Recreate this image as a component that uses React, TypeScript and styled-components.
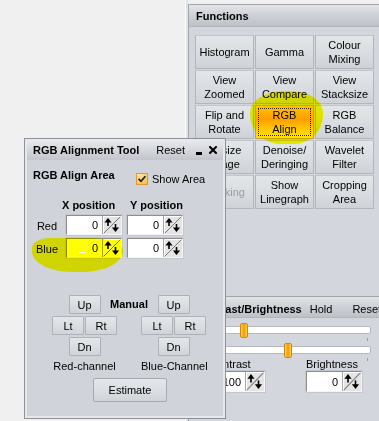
import React from "react";
import styled, { createGlobalStyle } from "styled-components";

const GlobalStyle = createGlobalStyle`
  html, body { margin: 0; padding: 0; background: #f0f0f0; }
  body { font-family: "Liberation Sans", Arial, sans-serif; font-size: 11px; color: #000; }
  *, *::before, *::after { box-sizing: border-box; }
`;

const Page = styled.div`
  position: relative;
  width: 379px;
  height: 421px;
  overflow: hidden;
  display: flex;
  background: #f0f0f0;
`;

const Workspace = styled.div`
  flex: none;
  width: 186px;
  border-right: 1px solid #fdfdfd;
`;

const Side = styled.div`
  flex: 1;
  min-width: 0;
  border-left: 2px solid #e2e3e5;
  padding-top: 4px;
  display: flex;
  flex-direction: column;
`;

const Panel = styled.div`
  flex: 1;
  width: 200px;
  border: 1px solid #a2a6ac;
  border-right: none;
  border-bottom: none;
  background: #d3d7dd;
  display: flex;
  flex-direction: column;
`;

const Section = styled.div<{ $h?: number }>`
  flex: none;
  height: ${(p) => (p.$h ? `${p.$h}px` : "auto")};
  display: flex;
  flex-direction: column;
  & + & {
    border-top: 1px solid #a2a6ac;
  }
`;

const Header = styled.div<{ $h: number; $pt: number }>`
  height: ${(p) => p.$h}px;
  padding: ${(p) => p.$pt}px 0 0 7px;
  line-height: 20px;
  display: flex;
  white-space: nowrap;
  background: linear-gradient(#e3e5e8 0%, #cfd2d7 45%, #bec2c8 100%);
  border-bottom: 1px solid #b3b7bd;
`;

const HeaderTitle = styled.span`
  font-weight: bold;
`;

const HeaderLink = styled.span<{ $ml: number }>`
  margin-left: ${(p) => p.$ml}px;
`;

const FnGrid = styled.div`
  display: grid;
  grid-template-columns: repeat(3, 59px);
  grid-auto-rows: 34px;
  gap: 1px;
  margin: 8px 0 0 6px;
`;

const FnBtn = styled.div<{ $active?: boolean; $disabled?: boolean }>`
  position: relative;
  display: flex;
  align-items: center;
  justify-content: center;
  text-align: center;
  line-height: 14px;
  white-space: pre-line;
  color: ${(p) => (p.$disabled ? "#9a9da2" : "#000")};
  border: 1px solid ${(p) => (p.$active ? "#c8a040" : "#b3b7bd")};
  border-top-color: ${(p) => (p.$active ? "#d8a030" : "#c2c5ca")};
  background: ${(p) =>
    p.$active
      ? "linear-gradient(#ffc34a 0%, #ff9e10 42%, #ffc400 68%, #ffe400 100%)"
      : "linear-gradient(#e3e6e9 0%, #d9dce0 55%, #cfd3d8 100%)"};
  &::after {
    content: "";
    display: ${(p) => (p.$active ? "block" : "none")};
    position: absolute;
    inset: 2px;
    border: 1px dotted #3a2a00;
  }
`;

const SliderBlock = styled.div`
  margin: 8px 0 0 7px;
  display: flex;
  flex-direction: column;
  gap: 12px;
`;

const Track = styled.div`
  position: relative;
  width: 175px;
  height: 8px;
  background: #fff;
  border: 1px solid #b6bac0;
  border-radius: 2px;
`;

const Thumb = styled.div`
  position: absolute;
  top: -4px;
  width: 8px;
  height: 15px;
  border: 1px solid #d58a00;
  border-radius: 2px;
  background: linear-gradient(90deg, #ffd24a 0%, #f29a10 50%, #ffd24a 100%);
`;

const Tick = styled.div`
  position: absolute;
  top: 11px;
  width: 1px;
  height: 3px;
  background: #9a9ea4;
`;

const ValueRow = styled.div`
  display: flex;
  margin: 4px 0 0 20px;
  gap: 41px;
`;

const ValueCol = styled.div`
  display: flex;
  flex-direction: column;
`;

const ValueLabel = styled.div`
  line-height: 13px;
  height: 13px;
  white-space: nowrap;
`;

/* spin box */
const SpinWrap = styled.div<{ $w: number; $h: number }>`
  position: relative;
  display: flex;
  width: ${(p) => p.$w}px;
  height: ${(p) => p.$h}px;
  border: 1px solid;
  border-color: #8d8d8d #f6f6f6 #f6f6f6 #8d8d8d;
  outline: 1px solid #c4c7cc;
`;

const SpinField = styled.div<{ $hl?: boolean }>`
  flex: 1;
  position: relative;
  background: ${(p) => (p.$hl ? "#ffff00" : "#fff")};
  border-right: 1px solid #a8a8a8;
  text-align: right;
  padding-right: 4px;
  display: flex;
  align-items: center;
  justify-content: flex-end;
`;

const SpinBtn = styled.div<{ $hl?: boolean }>`
  flex: none;
  width: 18px;
  display: flex;
  background: ${(p) => (p.$hl ? "#ffff00" : "#e4e4e4")};
  svg {
    display: block;
  }
`;

const Caret = styled.span`
  position: absolute;
  left: 12px;
  bottom: 4px;
  width: 6px;
  height: 1px;
  background: #fff;
  z-index: 5;
`;

function SpinArrows() {
  return (
    <svg width="18" height="100%" viewBox="0 0 18 18" preserveAspectRatio="none">
      <line x1="0.5" y1="17.5" x2="17.5" y2="0.5" stroke="#777" strokeWidth="1" />
      <path d="M5 2 L8.6 6.4 L1.4 6.4 Z" fill="#000" />
      <rect x="4.2" y="5" width="1.6" height="5" fill="#000" />
      <path d="M12.5 16 L16.1 11.6 L8.9 11.6 Z" fill="#000" />
      <rect x="11.7" y="8" width="1.6" height="5" fill="#000" />
      <line x1="0.5" y1="0.5" x2="17.5" y2="0.5" stroke="#fff" />
      <line x1="0.5" y1="0.5" x2="0.5" y2="17.5" stroke="#fff" />
    </svg>
  );
}

function SpinBox({
  value,
  w = 56,
  h = 20,
  hl,
  caret,
}: {
  value: string;
  w?: number;
  h?: number;
  hl?: boolean;
  caret?: boolean;
}) {
  return (
    <SpinWrap $w={w} $h={h}>
      <SpinField $hl={hl}>
        {caret && <Caret />}
        {value}
      </SpinField>
      <SpinBtn $hl={hl}>
        <SpinArrows />
      </SpinBtn>
    </SpinWrap>
  );
}

/* dialog */
const Dialog = styled.div`
  position: absolute;
  left: 24px;
  top: 138px;
  width: 202px;
  height: 281px;
  z-index: 3;
  border: 1px solid #8f9399;
  background: #e7e8eb;
  padding: 1px 2px 2px 2px;
  display: flex;
  flex-direction: column;
`;

const TitleBar = styled.div`
  flex: none;
  height: 20px;
  display: flex;
  align-items: center;
  padding: 0 6px 0 6px;
  white-space: nowrap;
  background: linear-gradient(#e8eaed 0%, #d4d7dc 50%, #c2c6cc 100%);
`;

const TitleText = styled.span`
  font-weight: bold;
`;

const TitleReset = styled.span`
  margin-left: auto;
`;

const TitleIcons = styled.div`
  display: flex;
  align-items: center;
  gap: 7px;
  margin-left: 11px;
  svg {
    display: block;
  }
`;

const Body = styled.div`
  position: relative;
  flex: 1;
  background: #d0d4da;
  display: flex;
  flex-direction: column;
`;

const AreaRow = styled.div`
  height: 25px;
  display: flex;
  align-items: flex-start;
  padding-left: 6px;
`;

const AreaLabel = styled.div`
  width: 103px;
  margin-top: 9px;
  line-height: 13px;
  font-weight: bold;
  white-space: nowrap;
`;

const CheckGroup = styled.div`
  margin-top: 13px;
  display: flex;
  align-items: center;
  gap: 4px;
  line-height: 12px;
  svg {
    display: block;
  }
`;

const PosGrid = styled.div`
  margin: 14px 0 0 6px;
  display: grid;
  grid-template-columns: 28px 56px 56px;
  grid-template-rows: 13px 20px 20px;
  column-gap: 5px;
  row-gap: 3px;
  align-items: center;
  & > * {
    position: relative;
  }
`;

const PosHead = styled.div<{ $dx: number }>`
  font-weight: bold;
  white-space: nowrap;
  line-height: 13px;
  margin-left: ${(p) => p.$dx}px;
`;

const RowLabel = styled.div`
  text-align: center;
  line-height: 13px;
  padding-top: 3px;
`;

const ManualGrid = styled.div`
  margin: 37px 0 0 25px;
  display: grid;
  grid-template-columns: 65px 24px 65px;
  grid-template-rows: 19px 19px 19px 13px;
  row-gap: 2px;
`;

const PadPair = styled.div`
  display: flex;
  gap: 1px;
`;

const SmallBtn = styled.div<{ $w?: number }>`
  width: ${(p) => p.$w ?? 32}px;
  height: 19px;
  justify-self: center;
  display: flex;
  align-items: center;
  justify-content: center;
  border: 1px solid #aeb2b8;
  border-radius: 1px;
  background: linear-gradient(#e4e7ea 0%, #dadde1 55%, #d0d4d9 100%);
`;

const ManualLabel = styled.div`
  justify-self: center;
  font-weight: bold;
  white-space: nowrap;
  line-height: 19px;
`;

const ChannelLabel = styled.div<{ $col: number }>`
  grid-column: ${(p) => p.$col};
  margin-top: 2px;
  text-align: center;
  white-space: nowrap;
  line-height: 13px;
`;

const EstimateBtn = styled(SmallBtn)`
  margin: 7px 0 0 66px;
  height: 24px;
  justify-self: auto;
  border-radius: 2px;
  border-color: #a6aab0;
`;

const Highlight = styled.div`
  position: absolute;
  z-index: 4;
  background: #ffff00;
  mix-blend-mode: multiply;
  pointer-events: none;
`;

const AlignMark = styled(Highlight)`
  left: 250px;
  top: 91px;
  width: 73px;
  height: 53px;
  border-radius: 48% 44% 40% 42% / 40% 42% 56% 56%;
`;

const BlueMark = styled(Highlight)`
  left: 5px;
  top: 78px;
  width: 91px;
  height: 34px;
  border-radius: 22% 40% 48% 50% / 30% 40% 70% 64%;
`;

const fnButtons: { label: string; active?: boolean; disabled?: boolean }[] = [
  { label: "Histogram" },
  { label: "Gamma" },
  { label: "Colour\nMixing" },
  { label: "View\nZoomed" },
  { label: "View\nCompare" },
  { label: "View\nStacksize" },
  { label: "Flip and\nRotate" },
  { label: "RGB\nAlign", active: true },
  { label: "RGB\nBalance" },
  { label: "Resize\nImage" },
  { label: "Denoise/\nDeringing" },
  { label: "Wavelet\nFilter" },
  { label: "Masking", disabled: true },
  { label: "Show\nLinegraph" },
  { label: "Cropping\nArea" },
];

function Pad() {
  return null;
}

export default function App() {
  const sliders = [43, 87];
  return (
    <>
      <GlobalStyle />
      <Page>
        <Workspace />
        <Side>
          <Panel>
            <Section $h={291}>
              <Header $h={22} $pt={1}>
                <HeaderTitle>Functions</HeaderTitle>
              </Header>
              <FnGrid>
                {fnButtons.map((b) => (
                  <FnBtn key={b.label} $active={b.active} $disabled={b.disabled}>
                    {b.label}
                  </FnBtn>
                ))}
              </FnGrid>
            </Section>
            <Section>
              <Header $h={21} $pt={2}>
                <HeaderTitle>Contrast/Brightness</HeaderTitle>
                <HeaderLink $ml={8}>Hold</HeaderLink>
                <HeaderLink $ml={20}>Reset</HeaderLink>
              </Header>
              <SliderBlock>
                {sliders.map((pos, i) => (
                  <Track key={i}>
                    <Thumb style={{ left: pos }} />
                    <Tick style={{ left: 1 }} />
                    <Tick style={{ right: 2 }} />
                  </Track>
                ))}
              </SliderBlock>
              <ValueRow>
                <ValueCol>
                  <ValueLabel>Contrast</ValueLabel>
                  <SpinBox value="100" h={21} />
                </ValueCol>
                <ValueCol>
                  <ValueLabel>Brightness</ValueLabel>
                  <SpinBox value="0" h={21} />
                </ValueCol>
              </ValueRow>
            </Section>
          </Panel>
        </Side>

        <AlignMark />

        <Dialog>
          <TitleBar>
            <TitleText>RGB Alignment Tool</TitleText>
            <TitleReset>Reset</TitleReset>
            <TitleIcons>
              <svg width="6" height="12" viewBox="0 0 6 12">
                <rect x="0" y="8" width="6" height="3" fill="#000" />
              </svg>
              <svg width="8" height="8" viewBox="0 0 8 8">
                <path d="M1 1 L7 7 M7 1 L1 7" stroke="#000" strokeWidth="2" strokeLinecap="square" />
              </svg>
            </TitleIcons>
          </TitleBar>
          <Body>
            <AreaRow>
              <AreaLabel>RGB Align Area</AreaLabel>
              <CheckGroup>
                <svg width="12" height="12" viewBox="0 0 12 12">
                  <defs>
                    <linearGradient id="cb" x1="0" y1="0" x2="1" y2="1">
                      <stop offset="0" stopColor="#ffe9b8" />
                      <stop offset="1" stopColor="#f7b948" />
                    </linearGradient>
                  </defs>
                  <rect x="0.5" y="0.5" width="11" height="11" fill="url(#cb)" stroke="#e39a2a" />
                  <path d="M2.6 5.8 L5 8.3 L9.4 3.3" fill="none" stroke="#1e1e1e" strokeWidth="1.7" />
                </svg>
                <span>Show Area</span>
              </CheckGroup>
            </AreaRow>
            <PosGrid>
              <span />
              <PosHead $dx={-4}>X position</PosHead>
              <PosHead $dx={3}>Y position</PosHead>
              <RowLabel>Red</RowLabel>
              <SpinBox value="0" />
              <SpinBox value="0" />
              <RowLabel>Blue</RowLabel>
              <SpinBox value="0" hl caret />
              <SpinBox value="0" />
            </PosGrid>
            <ManualGrid>
              <SmallBtn>Up</SmallBtn>
              <ManualLabel>Manual</ManualLabel>
              <SmallBtn>Up</SmallBtn>
              <PadPair>
                <SmallBtn>Lt</SmallBtn>
                <SmallBtn>Rt</SmallBtn>
              </PadPair>
              <span />
              <PadPair>
                <SmallBtn>Lt</SmallBtn>
                <SmallBtn>Rt</SmallBtn>
              </PadPair>
              <SmallBtn>Dn</SmallBtn>
              <span />
              <SmallBtn>Dn</SmallBtn>
              <ChannelLabel $col={1}>Red-channel</ChannelLabel>
              <ChannelLabel $col={3}>Blue-Channel</ChannelLabel>
            </ManualGrid>
            <EstimateBtn $w={74}>Estimate</EstimateBtn>
            <BlueMark />
          </Body>
        </Dialog>
        <Pad />
      </Page>
    </>
  );
}
